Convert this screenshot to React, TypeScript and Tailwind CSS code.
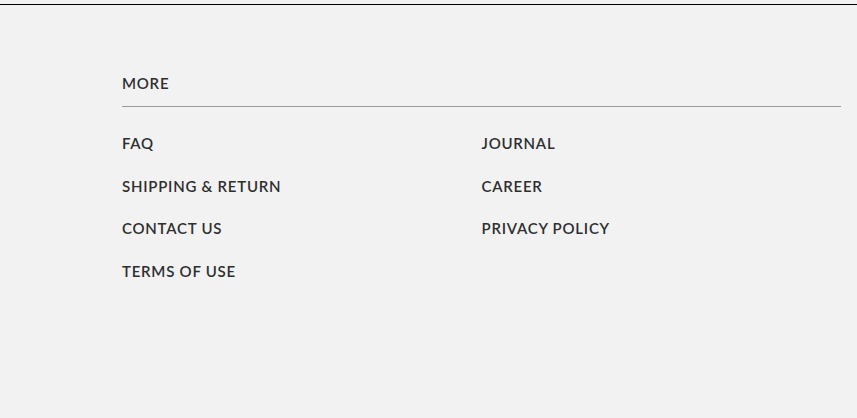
const leftLinks = ["FAQ", "SHIPPING & RETURN", "CONTACT US", "TERMS OF USE"];
const rightLinks = ["JOURNAL", "CAREER", "PRIVACY POLICY"];

export default function App() {
  return (
    <div className="h-screen w-full bg-[#f2f2f2] pt-1" style={{ fontFamily: "Lato, 'Open Sans', sans-serif" }}>
      <div className="border-t border-black pl-[122px] pr-[16px] pt-[68px]">
        {/* Heading */}
        <div className="border-b border-[#9a9a9a] pb-[13px]">
          <h2 className="text-[15px] leading-5 font-semibold tracking-[0.05em] text-[#2e2e2e]">MORE</h2>
        </div>

        {/* Links */}
        <div className="mt-[26px] grid grid-cols-2">
          <ul className="flex flex-col gap-[22.7px]">
            {leftLinks.map((l) => (
              <li key={l} className="text-[15px] leading-5 font-semibold tracking-[0.05em] text-[#2e2e2e]">
                {l}
              </li>
            ))}
          </ul>
          <ul className="flex flex-col gap-[22.7px]">
            {rightLinks.map((l) => (
              <li key={l} className="text-[15px] leading-5 font-semibold tracking-[0.05em] text-[#2e2e2e]">
                {l}
              </li>
            ))}
          </ul>
        </div>
      </div>
    </div>
  );
}
